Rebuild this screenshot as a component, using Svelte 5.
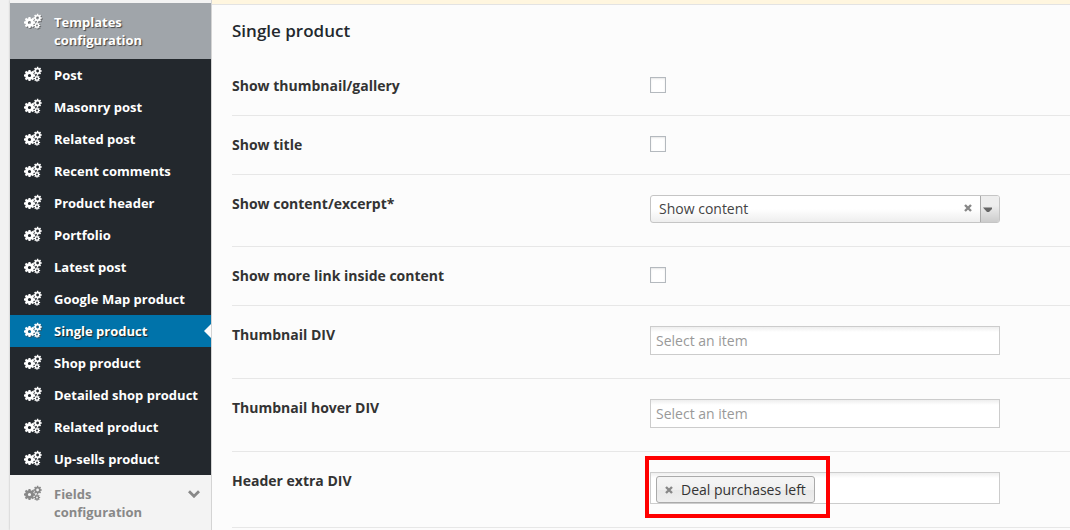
<script>
  const items = [
    'Post', 'Masonry post', 'Related post', 'Recent comments', 'Product header',
    'Portfolio', 'Latest post', 'Google Map product', 'Single product',
    'Shop product', 'Detailed shop product', 'Related product', 'Up-sells product'
  ];
  let active = $state('Single product');
  let content = $state('content');
  let tags = $state(['Deal purchases left']);

  // Outline of a gear with n square teeth, followed by its round hole.
  function gear(cx, cy, outer, root, hole, n) {
    const points = [];
    for (let i = 0; i < n; i++) {
      const a = (i / n) * Math.PI * 2;
      const w = Math.PI / n;
      for (const [r, d] of [[root, -w * 0.66], [outer, -w * 0.46], [outer, w * 0.46], [root, w * 0.66]]) {
        points.push(`${(cx + r * Math.cos(a + d)).toFixed(2)} ${(cy + r * Math.sin(a + d)).toFixed(2)}`);
      }
    }
    return `M${points.join('L')}ZM${cx - hole} ${cy}a${hole} ${hole} 0 1 0 ${hole * 2} 0a${hole} ${hole} 0 1 0 ${-hole * 2} 0Z`;
  }
  const gears = gear(5.5, 9.5, 5.7, 4.4, 1.6, 8) + gear(13.6, 5, 4.2, 3.2, 1.4, 8) + gear(13, 12.5, 3.2, 2.4, 0.9, 8);
</script>

{#snippet cogs()}
  <svg class="cogs" viewBox="0 0 18 17" aria-hidden="true"><path fill-rule="evenodd" d={gears} /></svg>
{/snippet}

{#snippet cross()}
  <svg class="cross" viewBox="0 0 8 8" aria-hidden="true"><path d="M1 1L7 7M7 1L1 7" /></svg>
{/snippet}

<div class="page">
  <nav class="sidebar">
    <a class="group open" href="#templates">{@render cogs()}<span>Templates configuration</span></a>
    <ul>
      {#each items as item}
        <li>
          <a class:active={active === item} href="#section" onclick={() => (active = item)}>
            {@render cogs()}<span>{item}</span>
          </a>
        </li>
      {/each}
    </ul>
    <a class="group" href="#fields">
      {@render cogs()}<span>Fields configuration</span>
      <svg class="chevron" viewBox="0 0 12 8" aria-hidden="true"><path d="M1 1.2L6 6.2L11 1.2" /></svg>
    </a>
  </nav>

  <main>
    <div class="notice"></div>
    <form>
      <h1>Single product</h1>
      <div class="row">
        <label for="thumb">Show thumbnail/gallery</label>
        <input id="thumb" type="checkbox" />
      </div>
      <div class="row">
        <label for="title">Show title</label>
        <input id="title" type="checkbox" />
      </div>
      <div class="row">
        <label for="content">Show content/excerpt*</label>
        <div class="field">
          <div class="combo">
            <select id="content" bind:value={content}>
              <option value=""></option>
              <option value="content">Show content</option>
              <option value="excerpt">Show excerpt</option>
            </select>
            <button type="button" class="clear" aria-label="Clear" onclick={() => (content = '')}>{@render cross()}</button>
            <span class="arrow"><svg viewBox="0 0 9 6" aria-hidden="true"><path d="M0 0.5H9V2L6 5H4Z" /></svg></span>
          </div>
        </div>
      </div>
      <div class="row">
        <label for="more">Show more link inside content</label>
        <input id="more" type="checkbox" />
      </div>
      <div class="row">
        <label for="div">Thumbnail DIV</label>
        <div class="field"><div class="multi"><input id="div" type="text" placeholder="Select an item" /></div></div>
      </div>
      <div class="row">
        <label for="hover">Thumbnail hover DIV</label>
        <div class="field"><div class="multi"><input id="hover" type="text" placeholder="Select an item" /></div></div>
      </div>
      <div class="row">
        <label for="extra">Header extra DIV</label>
        <div class="field">
          <div class="multi tagged">
            {#each tags as tag}
              <span class="tag">
                <button type="button" aria-label="Remove" onclick={() => (tags = tags.filter((t) => t !== tag))}>{@render cross()}</button>
                {tag}
              </span>
            {/each}
            <input id="extra" type="text" />
            <span class="highlight"></span>
          </div>
        </div>
      </div>
    </form>
  </main>
</div>

<style>
  :global(body) {
    background: #f1f1f1;
  }
  .page {
    display: flex;
    min-height: 100vh;
    box-sizing: border-box;
    padding-left: 10px;
    font-family: 'Open Sans', sans-serif;
    font-size: 14px;
    color: #333;
  }
  .sidebar {
    flex: none;
    width: 201px;
    padding-top: 3px;
    border-right: 1px solid #d4d4d4;
    background: #f3f3f3;
    box-shadow: 0 0 2px rgba(0, 0, 0, 0.25);
  }
  ul {
    margin: 0;
    padding: 0;
    list-style: none;
    background: #23282d;
  }
  .sidebar a {
    display: flex;
    position: relative;
    padding: 7px 13px 7px 14px;
    font-size: 13px;
    font-weight: 700;
    line-height: 18px;
    color: #fff;
    text-decoration: none;
    white-space: nowrap;
  }
  .sidebar a.group {
    padding: 10px 11px 9px 14px;
    color: #888;
    white-space: normal;
  }
  .sidebar a.group span {
    width: 110px;
  }
  .sidebar a.open {
    padding-bottom: 10px;
    background: #a0a5aa;
    color: #fff;
    text-shadow: 1px 1px 1px #444;
  }
  .sidebar a.active {
    background: #0073aa;
    text-shadow: 1px 1px 1px #222;
  }
  .open .cogs,
  .active .cogs {
    filter: drop-shadow(1px 1px 0 #4449);
  }
  .sidebar a.active::after {
    content: '';
    position: absolute;
    right: 0;
    top: 9px;
    border: 7px solid transparent;
    border-left: 0;
    border-right-color: #fcfcfc;
  }
  .cogs {
    flex: none;
    width: 18px;
    height: 17px;
    margin-right: 12px;
    fill: currentColor;
  }
  .chevron {
    width: 12px;
    height: 8px;
    margin: 5px 0 0 auto;
    fill: none;
    stroke: currentColor;
    stroke-width: 2.8;
  }
  main {
    flex: 1;
    min-width: 0;
    background: #fcfcfc;
  }
  .notice {
    height: 4px;
    background: #fff6df;
    border-bottom: 1px solid #e3e3e3;
  }
  form {
    padding-left: 20px;
  }
  h1 {
    margin: 0;
    padding: 15px 0;
    font-size: 17px;
    font-weight: 600;
    line-height: 22px;
    color: #23282d;
  }
  .row {
    display: grid;
    grid-template-columns: 418px minmax(0, 1fr);
    align-items: start;
    padding: 20px 0;
    border-bottom: 1px solid #e7e7e7;
  }
  .row > label {
    font-weight: 700;
    line-height: 18px;
  }
  input[type='checkbox'] {
    appearance: none;
    width: 16px;
    height: 16px;
    margin: 0;
    border: 1px solid #b4b9be;
    background: #fff;
    box-shadow: inset 0 1px 2px rgba(0, 0, 0, 0.1);
  }
  input[type='checkbox']:checked {
    background: #0073aa;
  }
  .field {
    max-width: 350px;
    padding-bottom: 3px;
  }
  .combo {
    display: flex;
    align-items: center;
    height: 28px;
    box-sizing: border-box;
    border: 1px solid #c5c5c5;
    border-radius: 3px;
    overflow: hidden;
    background: linear-gradient(#fff 50%, #eee);
  }
  select {
    flex: 1;
    min-width: 0;
    height: 26px;
    padding: 0 8px 2px;
    border: 0;
    appearance: none;
    background: none;
    font: inherit;
    color: #444;
  }
  button {
    display: flex;
    padding: 0;
    border: 0;
    background: none;
  }
  .clear {
    margin-right: 8px;
  }
  .cross {
    width: 8px;
    height: 8px;
    fill: none;
    stroke: #888;
    stroke-width: 2.4;
  }
  .combo .cross {
    margin-bottom: 2px;
  }
  .arrow {
    display: flex;
    align-items: center;
    align-self: stretch;
    width: 16px;
    padding-left: 2px;
    border-left: 1px solid #aaa;
    background: linear-gradient(#eee 35%, #ccc);
  }
  .arrow svg {
    width: 9px;
    height: 6px;
    margin-top: 2px;
    fill: #666;
  }
  .multi {
    display: flex;
    position: relative;
    min-height: 29px;
    box-sizing: border-box;
    padding: 0 5px;
    border: 1px solid #ccc;
    background: linear-gradient(#eee, #fff 5px);
  }
  .multi input {
    flex: 1;
    min-width: 0;
    padding: 0;
    border: 0;
    background: none;
    font: inherit;
    color: #333;
  }
  .multi input::placeholder {
    color: #999;
  }
  .multi.tagged {
    padding-top: 3px;
  }
  .tag {
    display: flex;
    align-items: center;
    gap: 8px;
    height: 27px;
    box-sizing: border-box;
    padding: 0 8px;
    border: 1px solid #aaa;
    border-radius: 3px;
    background: linear-gradient(#f4f4f4 20%, #f0f0f0 50%, #e8e8e8 52%, #eee);
    white-space: nowrap;
  }
  .highlight {
    position: absolute;
    left: -6px;
    top: -17px;
    width: 177px;
    height: 54px;
    border: 4px solid #f00;
    pointer-events: none;
  }
</style>
